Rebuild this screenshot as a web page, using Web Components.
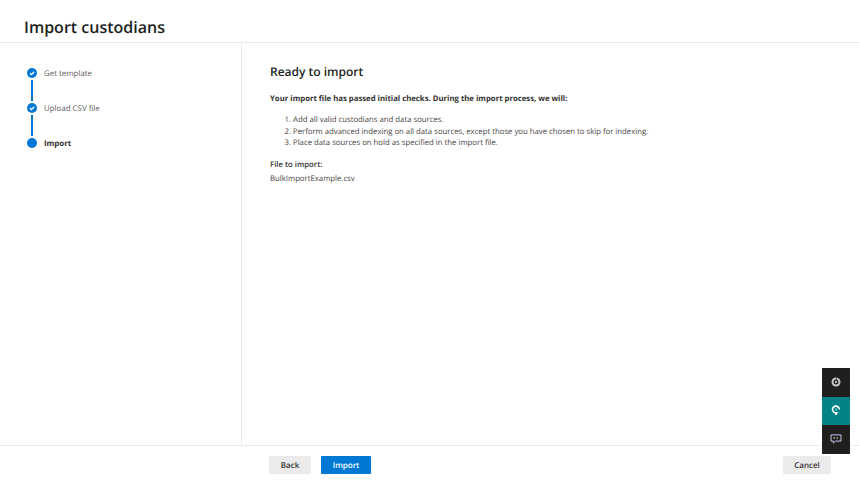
<!DOCTYPE html>
<html>
<head>
<meta charset="utf-8">
<title>Import custodians</title>
<style>
  html, body { margin: 0; height: 100%; }
  body { font-family: "Open Sans", "Liberation Sans", sans-serif; color: #323130; background: #fff; overflow: hidden; text-rendering: geometricPrecision; }
</style>
</head>
<body>
<wizard-page>
  <span slot="title">Import custodians</span>
  <wizard-step slot="steps" state="done" line>Get template</wizard-step>
  <wizard-step slot="steps" state="done" line>Upload CSV file</wizard-step>
  <wizard-step slot="steps" state="current">Import</wizard-step>
  <import-summary></import-summary>
  <ui-button slot="actions">Back</ui-button>
  <ui-button slot="actions" primary>Import</ui-button>
  <ui-button slot="cancel" wide>Cancel</ui-button>
</wizard-page>
<help-rail></help-rail>

<script>
customElements.define('wizard-page', class extends HTMLElement {
  constructor() {
    super();
    this.attachShadow({mode: 'open'});
    this.shadowRoot.innerHTML = `
      <style>
        :host {
          display: grid;
          grid-template-rows: 43px 403px 35px;
          height: 481px;
          box-sizing: border-box;
        }
        header {
          border-bottom: 1px solid #edebe9;
          padding: 16px 0 0 24px;
          font-size: 16px;
          line-height: 22px;
          font-weight: 600;
          color: #201f1e;
        }
        .middle {
          display: grid;
          grid-template-columns: 242px 1fr;
          min-height: 0;
          border-bottom: 1px solid #edebe9;
        }
        nav {
          border-right: 1px solid #edebe9;
          padding-top: 25px;
          padding-left: 27px;
        }
        main { padding: 21px 0 0 28px; }
        footer {
          display: flex;
          align-items: flex-start;
          padding: 10px 28px 0 269px;
          gap: 10px;
        }
        .spacer { flex: 1; }
      </style>
      <header><slot name="title"></slot></header>
      <div class="middle">
        <nav><slot name="steps"></slot></nav>
        <main><slot></slot></main>
      </div>
      <footer>
        <slot name="actions"></slot>
        <div class="spacer"></div>
        <slot name="cancel"></slot>
      </footer>
    `;
  }
});

customElements.define('wizard-step', class extends HTMLElement {
  constructor() {
    super();
    this.attachShadow({mode: 'open'});
    const done = this.getAttribute('state') === 'done';
    this.shadowRoot.innerHTML = `
      <style>
        :host {
          display: grid;
          grid-template-columns: 10px 1fr;
          column-gap: 7px;
          height: 35px;
          font-size: 7.9px;
          color: #605e5c;
        }
        :host([state="current"]) { font-weight: 700; color: #323130; }
        .marker { display: flex; flex-direction: column; align-items: center; }
        svg { display: block; flex: none; }
        .line { width: 2px; height: 21px; margin-top: 2px; background: #0078d4; }
        .label { line-height: 12px; height: 12px; white-space: nowrap; }
      </style>
      <div class="marker">
        <svg width="10" height="10" viewBox="0 0 10 10">
          <circle cx="5" cy="5" r="5" fill="#0078d4"/>
          ${done ? '<path d="M2.9 5.2 4.4 6.6 7.2 3.7" fill="none" stroke="#fff" stroke-width="1.3"/>' : ''}
        </svg>
        ${this.hasAttribute('line') ? '<div class="line"></div>' : ''}
      </div>
      <div class="label"><slot></slot></div>
    `;
  }
});

customElements.define('import-summary', class extends HTMLElement {
  constructor() {
    super();
    this.attachShadow({mode: 'open'});
    this.shadowRoot.innerHTML = `
      <style>
        :host { display: block; font-size: 7.75px; line-height: 11px; color: #484644; }
        h2 {
          margin: 0 0 14px;
          font-size: 12px;
          line-height: 16px;
          font-weight: 600;
          color: #201f1e;
        }
        p { margin: 0; }
        .lead { font-weight: 700; color: #323130; }
        ol { margin: 10px 0 10px; padding: 0 0 0 23px; }
        li { height: 11.5px; }
        .name { font-weight: 600; color: #323130; margin-bottom: 3px; }
      </style>
      <h2>Ready to import</h2>
      <p class="lead">Your import file has passed initial checks. During the import process, we will:</p>
      <ol>
        <li>Add all valid custodians and data sources.</li>
        <li>Perform advanced indexing on all data sources, except those you have chosen to skip for indexing.</li>
        <li>Place data sources on hold as specified in the import file.</li>
      </ol>
      <p class="name">File to import:</p>
      <p>BulkImportExample.csv</p>
    `;
  }
});

customElements.define('ui-button', class extends HTMLElement {
  constructor() {
    super();
    this.attachShadow({mode: 'open'});
    this.shadowRoot.innerHTML = `
      <style>
        :host {
          display: inline-flex;
          align-items: center;
          justify-content: center;
          height: 18px;
          width: 42px;
          box-sizing: border-box;
          background: #ebebeb;
          color: #323130;
          font-size: 8px;
          font-weight: 600;
          border-radius: 1px;
        }
        :host([primary]) { background: #0078d4; color: #fff; width: 50px; }
        :host([wide]) { width: 48px; }
      </style>
      <slot></slot>
    `;
  }
});

customElements.define('help-rail', class extends HTMLElement {
  constructor() {
    super();
    this.attachShadow({mode: 'open'});
    this.shadowRoot.innerHTML = `
      <style>
        :host {
          position: absolute;
          left: 822px;
          top: 368px;
          width: 28px;
          display: flex;
          flex-direction: column;
        }
        div {
          height: 28.5px;
          background: #201f1e;
          display: flex;
          align-items: center;
          justify-content: center;
        }
        .teal { background: #038387; }
      </style>
      <div>
        <svg width="10" height="10" viewBox="0 0 10 10">
          <circle cx="5" cy="5" r="4.5" fill="#c8c8c8"/>
          <circle cx="5" cy="5" r="2.5" fill="#2b2a29"/>
          <circle cx="5" cy="5" r="1" fill="#e8e8e8"/>
          <path d="M5.6 .6 5.4 2.6" stroke="#201f1e" stroke-width=".8"/>
        </svg>
      </div>
      <div class="teal">
        <svg width="10" height="11" viewBox="0 0 10 11">
          <path d="M6.6 7.4A3.2 3.2 0 0 1 5 7.9 3.4 3.4 0 1 1 8.3 4.5" fill="none" stroke="#fff" stroke-width="1.6"/>
          <path d="M3.6 7.2 4.4 10.2 6.2 9.4 5.4 7.2Z" fill="#fff"/>
          <rect x="4.5" y="3.4" width="1.1" height="2.2" fill="#bfe3e3"/>
        </svg>
      </div>
      <div>
        <svg width="12" height="10" viewBox="0 0 12 10">
          <path d="M1 .9h10v6.2H5.6L3.4 9.1v-2H1Z" fill="none" stroke="#c4c4ee" stroke-width="1"/>
          <path d="M4.2 3.2v1.6M7.2 3.2v1.6" stroke="#f0e0d0" stroke-width="1.1"/>
        </svg>
      </div>
    `;
  }
});
</script>
</body>
</html>
